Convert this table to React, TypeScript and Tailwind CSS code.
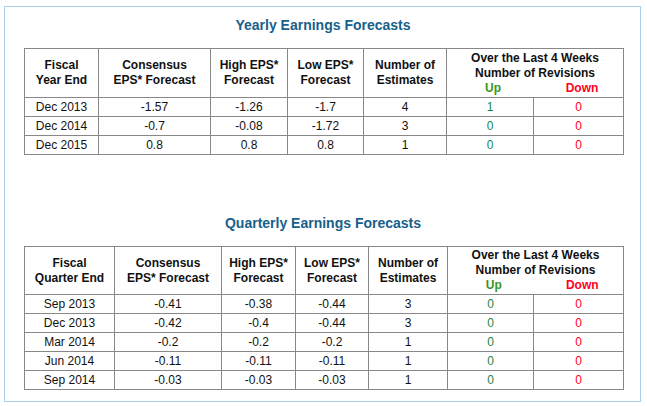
import React from 'react';

type Row = { period: string; cons: string; high: string; low: string; num: string; up: string; down: string };

const YEARLY: Row[] = [
  { period: 'Dec 2013', cons: '-1.57', high: '-1.26', low: '-1.7', num: '4', up: '1', down: '0' },
  { period: 'Dec 2014', cons: '-0.7', high: '-0.08', low: '-1.72', num: '3', up: '0', down: '0' },
  { period: 'Dec 2015', cons: '0.8', high: '0.8', low: '0.8', num: '1', up: '0', down: '0' },
];

const QUARTERLY: Row[] = [
  { period: 'Sep 2013', cons: '-0.41', high: '-0.38', low: '-0.44', num: '3', up: '0', down: '0' },
  { period: 'Dec 2013', cons: '-0.42', high: '-0.4', low: '-0.44', num: '3', up: '0', down: '0' },
  { period: 'Mar 2014', cons: '-0.2', high: '-0.2', low: '-0.2', num: '1', up: '0', down: '0' },
  { period: 'Jun 2014', cons: '-0.11', high: '-0.11', low: '-0.11', num: '1', up: '0', down: '0' },
  { period: 'Sep 2014', cons: '-0.03', high: '-0.03', low: '-0.03', num: '1', up: '0', down: '0' },
];

function ForecastTable({
  title,
  firstHead,
  rows,
  widths,
  headH,
}: {
  title: string;
  firstHead: [string, string];
  rows: Row[];
  widths: number[];
  headH: string;
}) {
  const th = 'border border-[#888] font-bold text-center align-middle leading-[15px] px-1';
  const td = 'border border-[#888] text-center h-[19px] p-0 leading-[17px]';
  return (
    <div className="flex flex-col items-center">
      <h2 className="text-[14px] leading-[18px] font-bold text-[#17618a] mb-[14px]">{title}</h2>
      <table className="border-collapse table-fixed text-[12px] text-[#111] ml-[2px]" style={{ width: widths.reduce((a, b) => a + b, 0) }}>
        <colgroup>
          {widths.map((w, i) => (
            <col key={i} style={{ width: w }} />
          ))}
        </colgroup>
        <thead>
          <tr className={headH}>
            <th className={th}>
              {firstHead[0]}
              <br />
              {firstHead[1]}
            </th>
            <th className={th}>
              Consensus
              <br />
              EPS* Forecast
            </th>
            <th className={th}>
              High EPS*
              <br />
              Forecast
            </th>
            <th className={th}>
              Low EPS*
              <br />
              Forecast
            </th>
            <th className={th}>
              Number of
              <br />
              Estimates
            </th>
            <th colSpan={2} className={th}>
              <div>Over the Last 4 Weeks</div>
              <div>Number of Revisions</div>
              <div className="flex">
                <span className="w-1/2 text-[#3a961c]">Up</span>
                <span className="w-1/2 pl-[10px] text-[#ff0022]">Down</span>
              </div>
            </th>
          </tr>
        </thead>
        <tbody>
          {rows.map((r) => (
            <tr key={r.period}>
              <td className={td}>{r.period}</td>
              <td className={td}>{r.cons}</td>
              <td className={td}>{r.high}</td>
              <td className={td}>{r.low}</td>
              <td className={td}>{r.num}</td>
              <td className={`${td} text-[#1a8646]`}>{r.up}</td>
              <td className={`${td} text-[#ff0022]`}>{r.down}</td>
            </tr>
          ))}
        </tbody>
      </table>
    </div>
  );
}

export default function App() {
  return (
    <div className="w-[647px] h-[406px] bg-white pt-[6px] pl-[4px]" style={{ fontFamily: '"Liberation Sans", Arial, sans-serif' }}>
      <div className="w-[637px] h-[396px] border border-[#a9cfe9] pt-[9px] pl-[18px]">
        <div className="w-[600px]">
          <ForecastTable
            title="Yearly Earnings Forecasts"
            firstHead={['Fiscal', 'Year End']}
            rows={YEARLY}
            widths={[74, 112, 77, 76, 83, 87, 90]}
            headH="h-[49px]"
          />
          <div className="h-[59px]" />
          <ForecastTable
            title="Quarterly Earnings Forecasts"
            firstHead={['Fiscal', 'Quarter End']}
            rows={QUARTERLY}
            widths={[90, 107, 74, 73, 79, 86, 90]}
            headH="h-[48px]"
          />
        </div>
      </div>
    </div>
  );
}
